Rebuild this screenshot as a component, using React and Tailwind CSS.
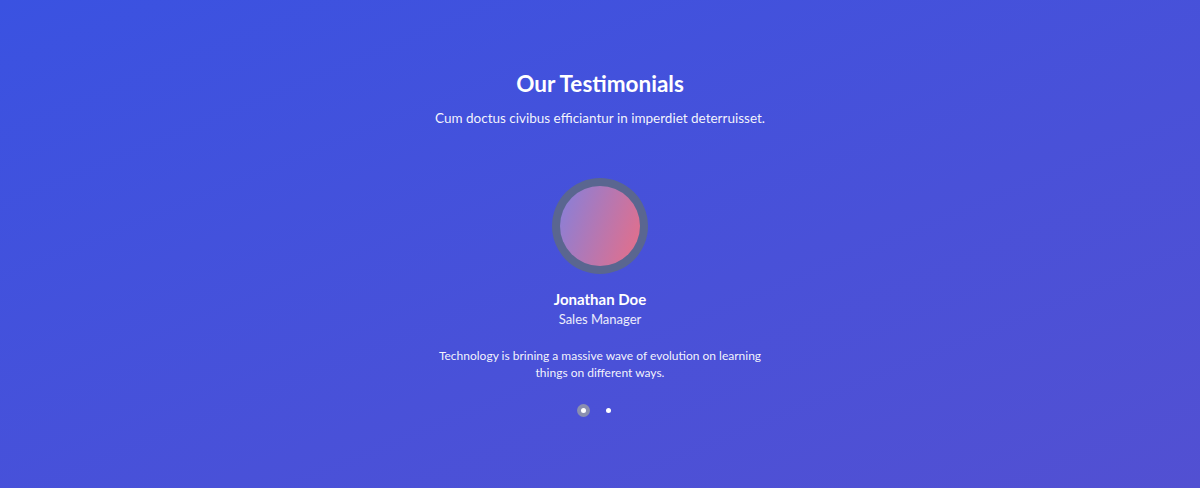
export default function App() {
  return (
    <section
      className="w-full h-[488px] bg-gradient-to-br from-[#3a52e1] to-[#5250d2] text-white flex flex-col items-center"
      style={{ fontFamily: "Lato, 'Noto Sans', sans-serif" }}
    >
      <h2 className="mt-[70px] text-[22.5px] leading-[28px] font-bold">Our Testimonials</h2>
      <p className="mt-[10px] text-[13.5px] leading-[20px] text-white/95">
        Cum doctus civibus efficiantur in imperdiet deterruisset.
      </p>

      <div className="mt-[50px] w-[96px] h-[96px] rounded-full bg-[#5a6690] flex items-center justify-center">
        <div className="w-[80px] h-[80px] rounded-full bg-[linear-gradient(110deg,#8580dc,#e86e86)]" />
      </div>

      <h3 className="mt-[15px] text-[15px] leading-[20px] font-bold">Jonathan Doe</h3>
      <p className="mt-[1px] text-[13px] leading-[18px] text-white/90">Sales Manager</p>

      <p className="mt-[19px] w-[330px] text-center text-[12px] leading-[17px] text-white/95">
        Technology is brining a massive wave of evolution on learning things on different ways.
      </p>

      <div className="mt-[23px] mr-[12px] flex items-center gap-[16px]">
        <span className="w-[13px] h-[13px] rounded-full bg-[#8a8fb0] flex items-center justify-center">
          <span className="w-[5px] h-[5px] rounded-full bg-white" />
        </span>
        <span className="w-[5px] h-[5px] rounded-full bg-white" />
      </div>
    </section>
  );
}
